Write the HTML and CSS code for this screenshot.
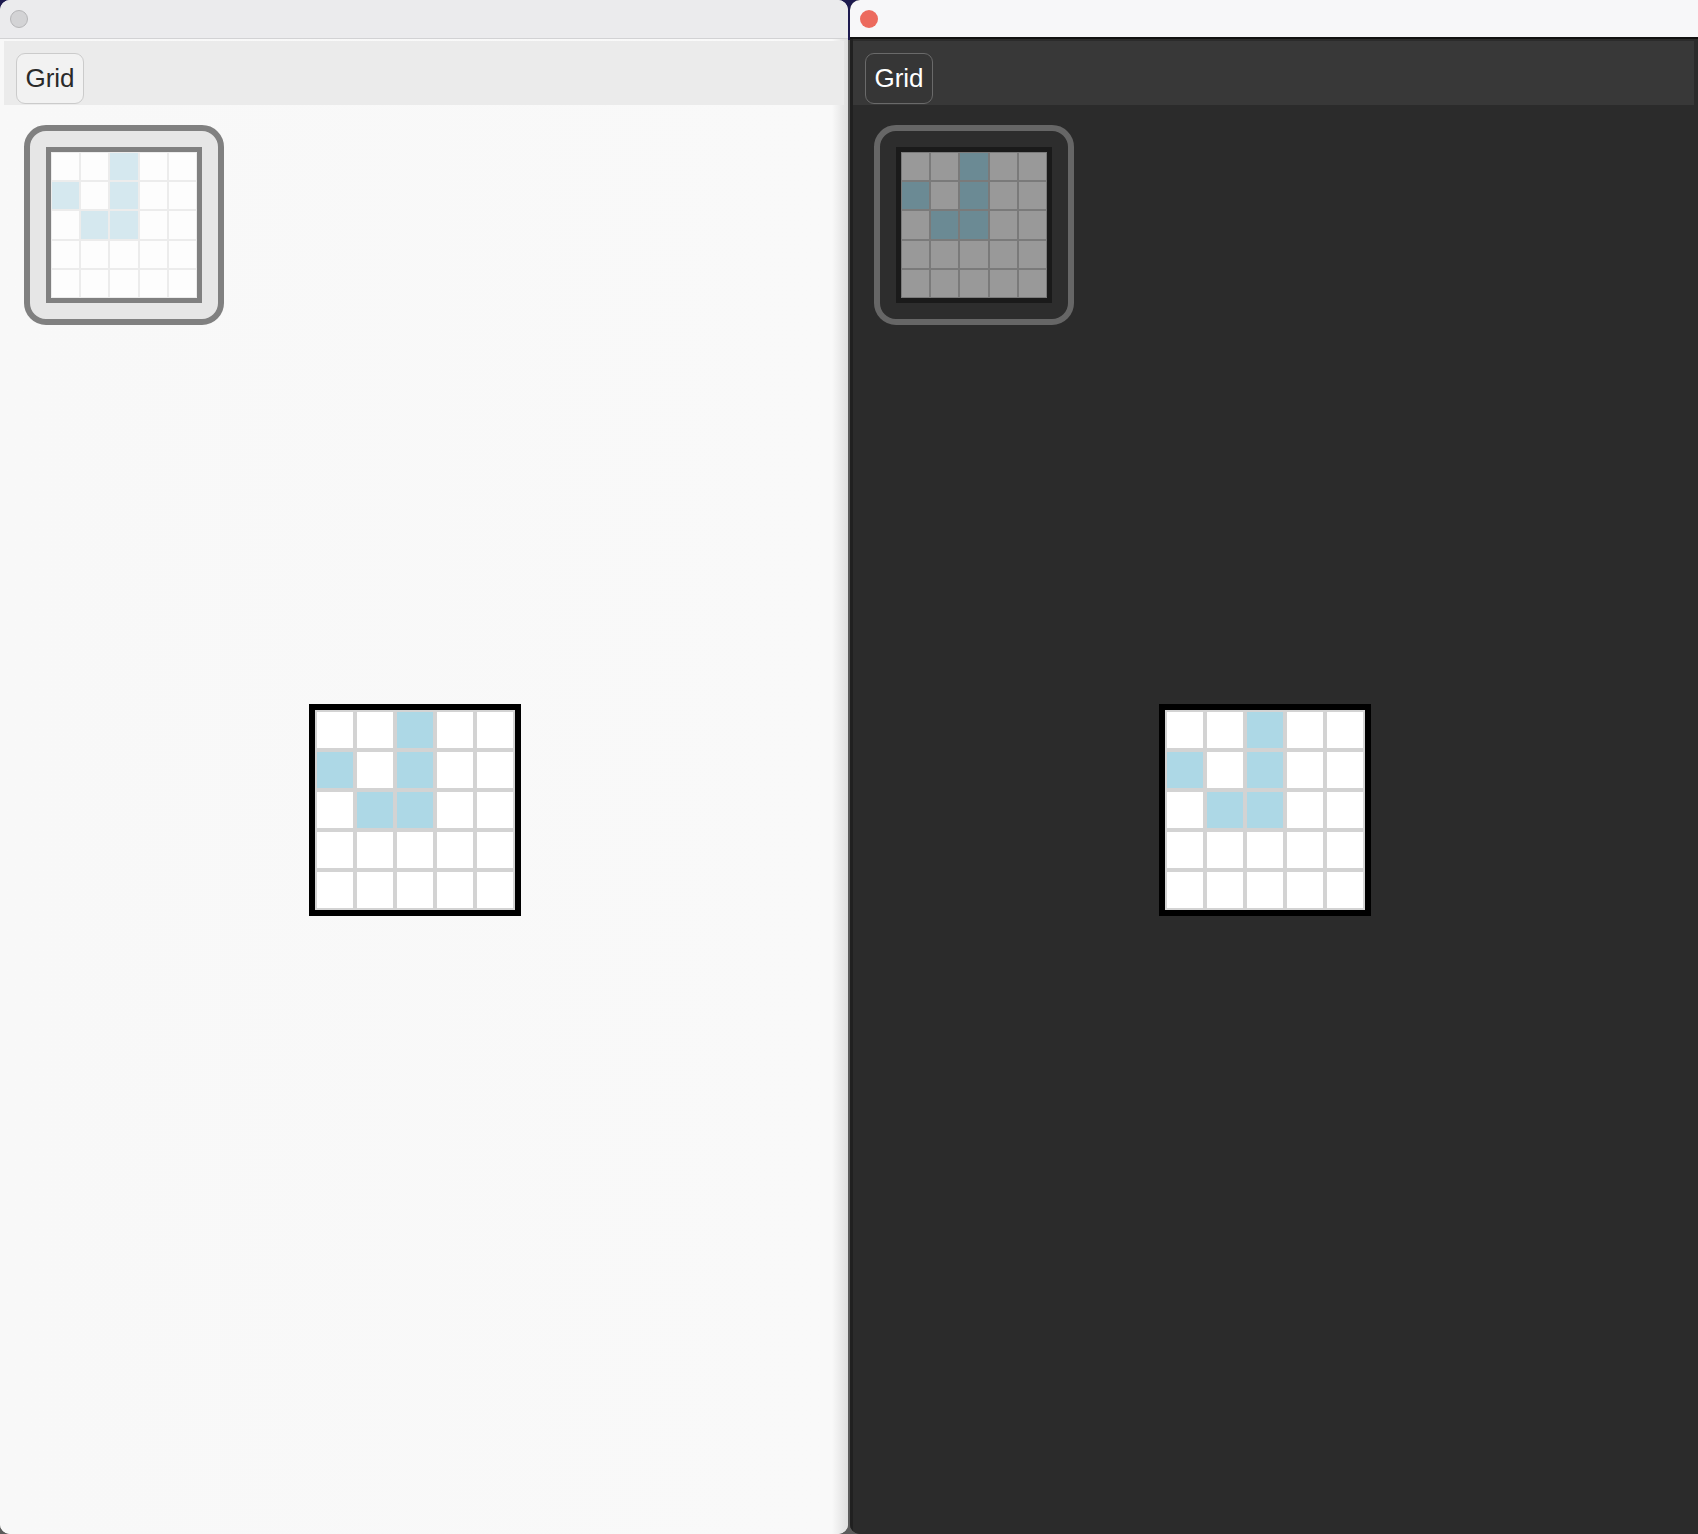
FILE: index.html
```html
<!DOCTYPE html>
<html>
<head>
<meta charset="utf-8">
<link rel="stylesheet" href="styles.css">
</head>
<body>
<div class="desk">
  <div class="win light">
    <div class="titlebar"><span class="dot"></span></div>
    <div class="body">
      <div class="toolbar"><button class="btn">Grid</button></div>
      <div class="content">
        <div class="thumb">
          <div class="tgrid">
            <div></div><div></div><div class="on"></div><div></div><div></div>
            <div class="on"></div><div></div><div class="on"></div><div></div><div></div>
            <div></div><div class="on"></div><div class="on"></div><div></div><div></div>
            <div></div><div></div><div></div><div></div><div></div>
            <div></div><div></div><div></div><div></div><div></div>
          </div>
        </div>
        <div class="grid">
          <div></div><div></div><div class="on"></div><div></div><div></div>
          <div class="on"></div><div></div><div class="on"></div><div></div><div></div>
          <div></div><div class="on"></div><div class="on"></div><div></div><div></div>
          <div></div><div></div><div></div><div></div><div></div>
          <div></div><div></div><div></div><div></div><div></div>
        </div>
      </div>
    </div>
  </div>
  <div class="win dark">
    <div class="titlebar"><span class="dot"></span></div>
    <div class="body">
      <div class="toolbar"><button class="btn">Grid</button></div>
      <div class="content">
        <div class="thumb">
          <div class="tgrid">
            <div></div><div></div><div class="on"></div><div></div><div></div>
            <div class="on"></div><div></div><div class="on"></div><div></div><div></div>
            <div></div><div class="on"></div><div class="on"></div><div></div><div></div>
            <div></div><div></div><div></div><div></div><div></div>
            <div></div><div></div><div></div><div></div><div></div>
          </div>
        </div>
        <div class="grid">
          <div></div><div></div><div class="on"></div><div></div><div></div>
          <div class="on"></div><div></div><div class="on"></div><div></div><div></div>
          <div></div><div class="on"></div><div class="on"></div><div></div><div></div>
          <div></div><div></div><div></div><div></div><div></div>
          <div></div><div></div><div></div><div></div><div></div>
        </div>
      </div>
    </div>
  </div>
</div>
</body>
</html>
```

FILE: styles.css
```css
* { box-sizing: border-box; }
html, body { margin: 0; padding: 0; }
body {
  width: 1698px;
  height: 1534px;
  overflow: hidden;
  background: linear-gradient(#1d1a4f 0, #1d1a4f 40px, #5b5b5b 40px);
  font-family: "Liberation Sans", Arial, sans-serif;
}
.desk {
  display: flex;
  gap: 2px;
  height: 1534px;
}
.win {
  width: 848px;
  height: 1534px;
  display: flex;
  flex-direction: column;
  overflow: hidden;
}
.win.light {
  border-radius: 10px;
  background: #f7f7f7;
}
.win.dark {
  border-radius: 10px 0 0 10px;
  background: #2b2b2b;
}
.titlebar {
  flex: none;
  display: flex;
  align-items: flex-start;
  padding: 10px 0 0 10px;
}
.light .titlebar {
  height: 39px;
  background: #ebebed;
  border-bottom: 1px solid #d2d2d4;
}
.dark .titlebar {
  height: 39px;
  background: #f7f7f9;
  border-bottom: 2px solid #111;
}
.dot {
  width: 18px;
  height: 18px;
  border-radius: 50%;
}
.light .dot {
  background: #d3d3d5;
  border: 1px solid #b5b5b7;
}
.dark .dot {
  background: #ec6a5e;
}
.body {
  flex: 1;
  display: flex;
  flex-direction: column;
  padding: 2px 4px 0 4px;
}
.light .body {
  background: linear-gradient(to right, #f8f8f8 0, #f9f9f9 calc(100% - 16px), #dedede 100%);
}
.dark .body {
  padding-left: 0;
  border-left: 3px solid #202020;
  background: #2b2b2b;
}
.toolbar {
  flex: none;
  height: 64px;
  padding: 12px 0 0 12px;
  display: flex;
  align-items: flex-start;
}
.light .toolbar { background: #ebebeb; }
.dark .toolbar { background: #383838; }
.btn {
  width: 68px;
  height: 51px;
  border-radius: 9px;
  font-family: "Liberation Sans", Arial, sans-serif;
  font-size: 26px;
  padding: 0;
  display: flex;
  align-items: center;
  justify-content: center;
}
.light .btn {
  background: #f2f2f2;
  border: 1.5px solid #cbcbcb;
  color: #2a2a2a;
}
.dark .btn {
  background: #363636;
  border: 1.5px solid #6a6a6a;
  color: #ffffff;
}
.content {
  flex: 1;
  display: flex;
  flex-direction: column;
  align-items: flex-start;
  padding: 20px 0 0 20px;
}
.dark .content { padding-left: 21px; }
.thumb {
  width: 200px;
  height: 200px;
  border-radius: 22px;
  border: 6px solid;
  display: flex;
  align-items: center;
  justify-content: center;
}
.light .thumb { background: #e6e6e6; border-color: #808080; }
.dark .thumb { background: #2d2d2d; border-color: #666666; }
.tgrid {
  width: 156px;
  height: 156px;
  border: 5px solid;
  display: grid;
  grid-template-columns: repeat(5, 1fr);
  grid-template-rows: repeat(5, 1fr);
}
.tgrid div { border: 1.5px solid; }
.light .tgrid { border-color: #808080; }
.light .tgrid div { background: #fdfdfd; border-color: #ececec; }
.light .tgrid div.on { background: #d5e8ef; }
.dark .tgrid { border-color: #1a1a1a; }
.dark .tgrid div { background: #999999; border-color: #7a7a7a; }
.dark .tgrid div.on { background: #6b8a94; }
.grid {
  margin: 379px 0 0 285px;
  width: 212px;
  height: 212px;
  border: 6px solid #000;
  display: grid;
  grid-template-columns: repeat(5, 40px);
  grid-template-rows: repeat(5, 40px);
}
.grid div {
  background: #ffffff;
  border: 2px solid #d3d3d3;
}
.grid div.on { background: #add8e6; }
```
